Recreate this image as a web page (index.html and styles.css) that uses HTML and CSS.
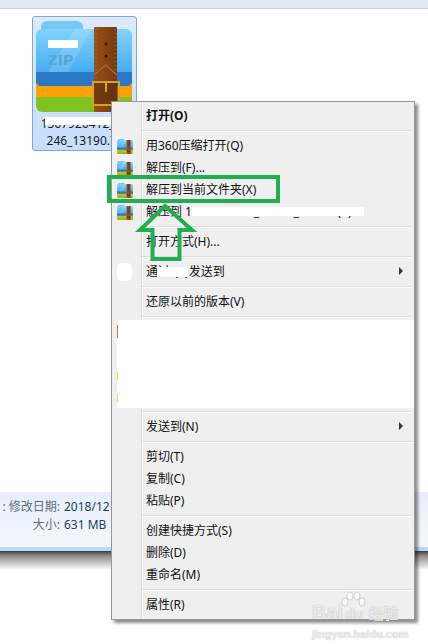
FILE: index.html
```html
<!DOCTYPE html>
<html lang="zh-CN">
  <head>
    <meta charset="UTF-8" />
    <title>解压到当前文件夹</title>
    <link rel="stylesheet" href="styles.css">
  </head>
  <body>
    <svg class="defs" width="0" height="0">
      <defs>
        <linearGradient id="folder" x1="0" y1="0" x2="0" y2="1">
          <stop offset="0" stop-color="#80d2fc" />
          <stop offset="1" stop-color="#33a0ec" />
        </linearGradient>
        <linearGradient id="belt" x1="0" y1="0" x2="1" y2="0">
          <stop offset="0" stop-color="#94501a" />
          <stop offset="0.5" stop-color="#8a4512" />
          <stop offset="1" stop-color="#74390f" />
        </linearGradient>
        <symbol id="rar" viewBox="0 0 96 91">
          <rect x="5" y="0" width="42" height="20" rx="6" fill="#74c9f9" />
          <path d="M6 8h84a6 6 0 0 1 6 6v52H0V14a6 6 0 0 1 6-6z" fill="url(#folder)" />
          <path d="M38 8h18L26 62H6z" fill="#ffffff" fill-opacity="0.14" />
          <path d="M0 51h96v12l-3 4H3l-3-4z" fill="#2a79c8" />
          <path d="M0 62l3 3h90l3-3v16H0z" fill="#ffa304" />
          <path d="M0 76h96v9a6 6 0 0 1-6 6H6a6 6 0 0 1-6-6z" fill="#7fc424" />
          <rect x="58" y="6" width="23" height="85" rx="1" fill="url(#belt)" />
          <path d="M60 8v50M79 8v50" fill="none" stroke="#c08a50" stroke-width="0.800" stroke-dasharray="1 3" />
          <path d="M58 54l11.500-10 11.500 10" fill="none" stroke="#a8632a" stroke-width="1.500" />
          <circle cx="70" cy="23" r="1.600" fill="#2e1505" />
          <circle cx="70" cy="35" r="1.600" fill="#2e1505" />
          <rect x="57" y="61" width="26" height="23" fill="#5b2c0b" fill-opacity="0.55" stroke="#d9a021" stroke-width="2" />
          <rect x="69" y="61" width="2" height="10" fill="#d9a021" />
        </symbol>
      </defs>
    </svg>

    <div class="toolbar"></div>

    <main class="files">
      <div class="file-item">
        <div class="file-icon">
          <svg class="big-icon" width="96" height="91"><use href="#rar" /></svg>
          <span class="zip-label">ZIP</span>
          <span class="patch icon-patch"></span>
        </div>
        <div class="file-name">1367926412_27<br />246_13190.7z</div>
        <span class="patch name-patch"></span>
      </div>
    </main>

    <footer class="details">
      <div class="details-grid">
        <span class="details-label">: 修改日期:</span>
        <span class="details-value">2018/12</span>
        <span class="details-label">大小:</span>
        <span class="details-value">631 MB</span>
      </div>
    </footer>
    <div class="window-bar"></div>
    <div class="window-shadow"></div>

    <nav class="menu">
      <div class="menu-item menu-default"><span class="menu-icon"></span>打开(O)</div>
      <div class="menu-sep"></div>
      <div class="menu-item"><svg class="menu-icon"><use href="#rar" /></svg>用360压缩打开(Q)</div>
      <div class="menu-item"><svg class="menu-icon"><use href="#rar" /></svg>解压到(F)...</div>
      <div class="menu-item"><svg class="menu-icon"><use href="#rar" /></svg>解压到当前文件夹(X)</div>
      <div class="menu-item"><svg class="menu-icon"><use href="#rar" /></svg>解压到 1367926412_27212_13190\(Y)</div>
      <div class="menu-sep"></div>
      <div class="menu-item"><span class="menu-icon"></span>打开方式(H)...</div>
      <div class="menu-sep"></div>
      <div class="menu-item"><span class="menu-icon"></span>通过QQ发送到<span class="submenu-arrow"></span></div>
      <div class="menu-sep"></div>
      <div class="menu-item"><span class="menu-icon"></span>还原以前的版本(V)</div>
      <div class="menu-sep"></div>
      <div class="menu-hidden"></div>
      <div class="menu-sep"></div>
      <div class="menu-item"><span class="menu-icon"></span>发送到(N)<span class="submenu-arrow"></span></div>
      <div class="menu-sep"></div>
      <div class="menu-item"><span class="menu-icon"></span>剪切(T)</div>
      <div class="menu-item"><span class="menu-icon"></span>复制(C)</div>
      <div class="menu-item"><span class="menu-icon"></span>粘贴(P)</div>
      <div class="menu-sep"></div>
      <div class="menu-item"><span class="menu-icon"></span>创建快捷方式(S)</div>
      <div class="menu-item"><span class="menu-icon"></span>删除(D)</div>
      <div class="menu-item"><span class="menu-icon"></span>重命名(M)</div>
      <div class="menu-sep"></div>
      <div class="menu-item"><span class="menu-icon"></span>属性(R)</div>
    </nav>

    <span class="patch row-patch"></span>
    <span class="patch qq-patch"></span>
    <span class="patch blob-patch"></span>

    <!-- green marks drawn on top of the screenshot -->
    <svg class="marks" width="428" height="644">
      <rect x="109" y="177" width="169" height="24" fill="none" stroke="#1fae50" stroke-width="4" />
      <path d="M165 206L192 230H179.500V259H152.500V230H140z" fill="none" stroke="#1fae50" stroke-width="4" />
    </svg>

    <div class="watermark">
      <svg class="paw" width="26" height="26" viewBox="0 0 26 26">
        <ellipse cx="5" cy="11" rx="3" ry="4" />
        <ellipse cx="10" cy="5" rx="3" ry="4" />
        <ellipse cx="17" cy="5" rx="3" ry="4" />
        <ellipse cx="22" cy="11" rx="3" ry="4" />
      </svg>
      <div class="wm-logo">Bai<span class="wm-du">du</span><span class="wm-cn">经验</span></div>
      <div class="wm-url">jingyan.baidu.com</div>
    </div>
  </body>
</html>
```

FILE: styles.css
```css
* {
  margin: 0;
  padding: 0;
  box-sizing: border-box;
}

body {
  position: relative;
  display: flex;
  flex-direction: column;
  width: 428px;
  height: 644px;
  overflow: hidden;
  background-color: #ffffff;
  color: #1a1a1a;
  font-family: "Noto Sans", "Noto Sans CJK SC", sans-serif;
  font-size: 12px;
}

.defs {
  position: absolute;
}

.toolbar {
  height: 9px;
  flex: none;
  background-color: #e0e9f6;
  border-bottom: 1px solid #c5ced9;
}

.files {
  flex: 1;
  padding: 7px 0 0 32px;
}

.file-item {
  position: relative;
  width: 105px;
  height: 135px;
  padding: 4px 3px 0;
  background: linear-gradient(#dcebfd, #c6dffc);
  border: 1px solid #83a7d2;
  border-radius: 3px;
}

.file-icon {
  position: relative;
  height: 91px;
}

.big-icon {
  display: block;
}

.zip-label {
  position: absolute;
  left: 12px;
  top: 30px;
  color: #5b9fd9;
  font-family: "Liberation Sans", sans-serif;
  font-size: 15px;
  font-weight: 700;
  letter-spacing: 1px;
}

.file-name {
  margin-top: 3px;
  line-height: 17px;
  text-align: center;
  white-space: nowrap;
}

.patch {
  position: absolute;
  background-color: #ffffff;
}

.icon-patch {
  left: 12px;
  top: 19px;
  width: 30px;
  height: 8px;
}

.name-patch {
  left: 12px;
  top: 100px;
  width: 66px;
  height: 8px;
}

.details {
  height: 55px;
  flex: none;
  padding-top: 6px;
  background: linear-gradient(#e6eff9, #f3f7fc);
}

.details-grid {
  display: grid;
  grid-template-columns: 60px auto;
  column-gap: 4px;
  justify-content: start;
  line-height: 18px;
  white-space: nowrap;
}

.details-label {
  color: #5d6e80;
  text-align: right;
}

.details-value {
  color: #26405c;
}

.window-bar {
  height: 4px;
  flex: none;
  background-color: #b9d9f8;
}

.window-shadow {
  height: 19px;
  margin-bottom: 74px;
  flex: none;
  background: linear-gradient(#3c3c3c, #8c8c8c 25%, #ffffff);
}

.menu {
  position: absolute;
  left: 111px;
  top: 101px;
  width: 304px;
  height: 519px;
  padding: 3px 0 2px;
  background: linear-gradient(90deg, transparent 29px, #e0e0e0 29px, #e0e0e0 30px, #f8f8f8 30px, #f8f8f8 31px, transparent 31px), #efefef;
  border: 1px solid #979797;
  box-shadow: 3px 3px 3px rgba(0, 0, 0, 0.45);
  color: #111111;
}

.menu-item {
  display: flex;
  align-items: center;
  height: 22px;
  padding: 0 11px 2px 0;
  white-space: nowrap;
}

.menu-default {
  font-weight: 700;
}

.menu-icon {
  display: block;
  width: 16px;
  height: 15px;
  margin: 2px 13px 0 5px;
  flex: none;
}

.submenu-arrow {
  width: 0;
  height: 0;
  margin-left: auto;
  border-top: 4px solid transparent;
  border-bottom: 4px solid transparent;
  border-left: 4px solid #333333;
}

.menu-sep {
  height: 2px;
  margin: 3px 2px 3px 30px;
  background: linear-gradient(#e0e0e0 50%, #fafafa 50%);
}

.menu-hidden {
  height: 88px;
  margin: -1px 0 1px 5px;
  background: linear-gradient(#a9825c, #a9825c) no-repeat 0 5px / 1px 13px,
    linear-gradient(#f3e04a, #f3e04a) no-repeat 0 52px / 1px 8px,
    linear-gradient(#f3e04a, #f3e04a) no-repeat 0 74px / 1px 8px,
    #ffffff;
}

.row-patch {
  left: 192px;
  top: 207px;
  width: 172px;
  height: 9px;
}

.qq-patch {
  left: 157px;
  top: 267px;
  width: 31px;
  height: 10px;
}

.blob-patch {
  left: 117px;
  top: 263px;
  width: 15px;
  height: 18px;
  border-radius: 5px;
}

.marks {
  position: absolute;
  left: 0;
  top: 0;
}

.watermark {
  position: absolute;
  left: 312px;
  top: 590px;
  width: 92px;
  color: rgba(255, 255, 255, 0.75);
  font-family: "Liberation Sans", "Noto Sans CJK SC", sans-serif;
  text-shadow: 0 0 1px rgba(110, 110, 110, 0.6);
}

.paw {
  position: absolute;
  left: 28px;
  top: 1px;
  fill: rgba(255, 255, 255, 0.75);
  stroke: rgba(140, 140, 140, 0.35);
}

.wm-logo {
  margin-top: 13px;
  font-size: 20px;
  font-weight: 700;
  line-height: 18px;
  white-space: nowrap;
}

.wm-du {
  margin-left: 2px;
  font-size: 15px;
}

.wm-cn {
  margin-left: 5px;
  font-size: 15px;
}

.wm-url {
  margin-top: 5px;
  font-size: 11px;
  font-weight: 700;
  line-height: 12px;
  white-space: nowrap;
}
```
